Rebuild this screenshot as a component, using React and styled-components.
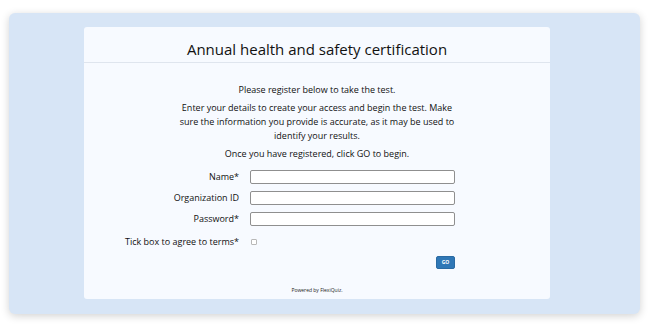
import React from "react";
import styled, { createGlobalStyle } from "styled-components";

const Global = createGlobalStyle`
  html, body { margin: 0; padding: 0; background: #ffffff; }
  body { font-family: "Open Sans", "Liberation Sans", sans-serif; color: #111; }
  * { box-sizing: border-box; }
`;

const Page = styled.div`
  width: 650px;
  height: 328px;
  padding: 13px 10px 14px 9px;
`;

const Panel = styled.div`
  height: 301px;
  background: #d7e5f6;
  border-radius: 6px;
  box-shadow: 0 2px 8px rgba(0, 0, 0, 0.18);
  padding: 14px 0 0 75px;
`;

const Card = styled.div`
  width: 466px;
  height: 272px;
  background: #f7faff;
  border-radius: 3px;
  display: flex;
  flex-direction: column;
`;

const Header = styled.div`
  height: 36px;
  border-bottom: 1px solid #dfe5ee;
  display: flex;
  align-items: center;
  justify-content: center;
  padding-top: 8px;
`;

const Title = styled.h1`
  margin: 0;
  font-size: 15px;
  font-weight: 400;
  color: #111;
`;

const Body = styled.div`
  display: flex;
  flex-direction: column;
  align-items: center;
  padding-top: 20px;
`;

const Text = styled.p`
  margin: 0 0 ${(p) => p.$mb || 5}px;
  max-width: ${(p) => p.$max || 400}px;
  font-size: 9px;
  font-weight: 500;
  line-height: 14px;
  text-align: center;
  color: #111;
`;

const Form = styled.div`
  align-self: stretch;
  display: grid;
  grid-template-columns: 155px 205px;
  column-gap: 11px;
  row-gap: 7px;
  margin-top: 4px;
  align-items: center;
`;

const Label = styled.label`
  font-size: 9px;
  font-weight: 500;
  line-height: 14px;
  text-align: right;
  color: #111;
`;

const Input = styled.input`
  height: 14px;
  width: 205px;
  border: 1px solid #8f8f8f;
  border-radius: 2px;
  background: #fff;
  padding: 0 3px;
  margin: 0;
`;

const CheckCell = styled.div`
  height: 14px;
  display: flex;
  align-items: center;
  margin-top: 2px;
`;

const CheckLabel = styled(Label)`
  margin-top: 2px;
`;

const Check = styled.span`
  width: 6px;
  height: 6px;
  margin-left: 1px;
  border: 1px solid #b8b8b8;
  border-radius: 1px;
  background: #fff;
  display: block;
`;

const ButtonRow = styled.div`
  grid-column: 2;
  display: flex;
  justify-content: flex-end;
`;

const GoButton = styled.button`
  height: 13px;
  width: 19px;
  padding: 0;
  border: 1px solid #2a6aa3;
  border-radius: 2px;
  background: #2f77b6;
  color: #fff;
  font-family: "Open Sans", "Liberation Sans", sans-serif;
  font-size: 5px;
  font-weight: 700;
  line-height: 1;
`;

const Footer = styled.div`
  margin-top: auto;
  padding-bottom: 6px;
  text-align: center;
  font-size: 5px;
  color: #222;
`;

export default function App() {
  return (
    <>
      <Global />
      <Page>
        <Panel>
          <Card>
            <Header>
              <Title>Annual health and safety certification</Title>
            </Header>
            <Body>
              <Text $mb={4}>Please register below to take the test.</Text>
              <Text $max={285} $mb={4}>
                Enter your details to create your access and begin the test. Make
                sure the information you provide is accurate, as it may be used to
                identify your results.
              </Text>
              <Text $mb={0}>Once you have registered, click GO to begin.</Text>
              <Form>
                <Label>Name*</Label>
                <Input type="text" />
                <Label>Organization ID</Label>
                <Input type="text" />
                <Label>Password*</Label>
                <Input type="password" />
                <CheckLabel>Tick box to agree to terms*</CheckLabel>
                <CheckCell>
                  <Check />
                </CheckCell>
                <ButtonRow>
                  <GoButton>GO</GoButton>
                </ButtonRow>
              </Form>
            </Body>
            <Footer>Powered by FlexiQuiz.</Footer>
          </Card>
        </Panel>
      </Page>
    </>
  );
}
